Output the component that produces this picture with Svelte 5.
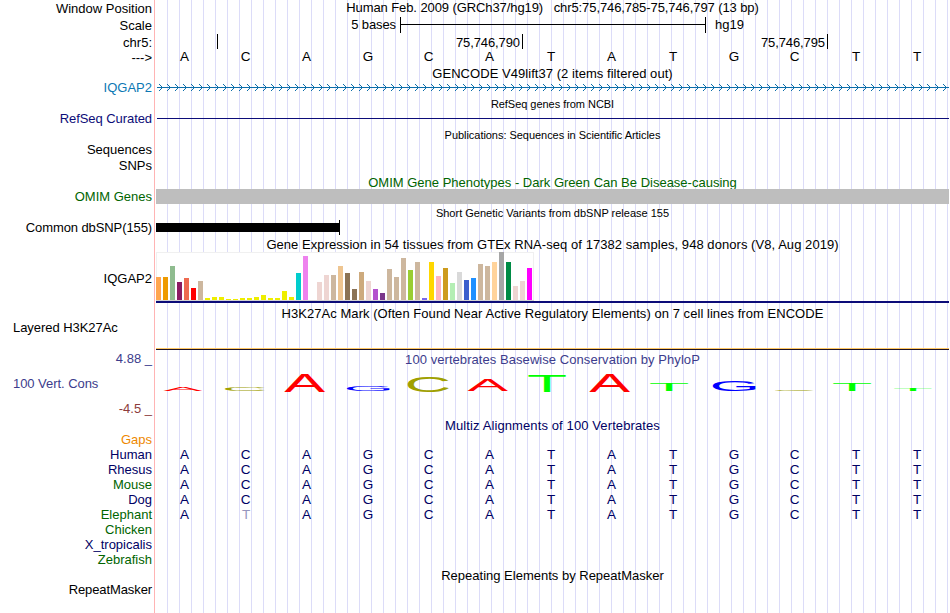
<script>
  const labels = [
    { text: 'Window Position', base: 13 },
    { text: 'Scale', base: 30 },
    { text: 'chr5:', base: 47 },
    { text: '--->', base: 62 },
    { text: 'IQGAP2', base: 92, tone: 'gencode' },
    { text: 'RefSeq Curated', base: 123, tone: 'refseq' },
    { text: 'Sequences', base: 154 },
    { text: 'SNPs', base: 170 },
    { text: 'OMIM Genes', base: 201, tone: 'green' },
    { text: 'Common dbSNP(155)', base: 232, tight: true },
    { text: 'IQGAP2', base: 283 },
    { text: 'Layered H3K27Ac', base: 332, left: true },
    { text: '4.88 _', base: 363, tone: 'cons' },
    { text: '100 Vert. Cons', base: 388, tone: 'cons', left: true },
    { text: '-4.5 _', base: 413, tone: 'neg' },
    { text: 'Gaps', base: 444, tone: 'gaps' },
    { text: 'Human', base: 459, tone: 'navy' },
    { text: 'Rhesus', base: 474, tone: 'navy' },
    { text: 'Mouse', base: 489, tone: 'green' },
    { text: 'Dog', base: 504, tone: 'navy' },
    { text: 'Elephant', base: 519, tone: 'green' },
    { text: 'Chicken', base: 534, tone: 'green' },
    { text: 'X_tropicalis', base: 549, tone: 'navy' },
    { text: 'Zebrafish', base: 564, tone: 'green' },
    { text: 'RepeatMasker', base: 594, tight: true }
  ].map((l, i, all) => ({ ...l, height: l.base - (i ? all[i - 1].base : -3) }));

  const bases = 'ACAGCATATGCTT'.split('');
  const species = ['Human', 'Rhesus', 'Mouse', 'Dog', 'Elephant'];
  const arrows = Array.from({ length: 99 }, (_, i) => 3 + i * 8);

  const gtex = [
    ['#ffa54f', 23], ['#ee9a00', 23], ['#8fbc8f', 34], ['#8b1c62', 18], ['#ee6a50', 22], ['#ff0000', 12],
    ['#cdb79e', 19], ['#eeee00', 2], ['#eeee00', 3], ['#eeee00', 3], ['#eeee00', 1], ['#eeee00', 1],
    ['#eeee00', 2], ['#eeee00', 2], ['#eeee00', 3], ['#eeee00', 5], ['#eeee00', 2], ['#eeee00', 2],
    ['#eeee00', 9], ['#eeee00', 3], ['#00cdcd', 27], ['#ee82ee', 44], ['#9ac0cd', 0], ['#eed5d2', 18],
    ['#eed5d2', 25], ['#cdb79e', 25], ['#eec591', 34], ['#8b7355', 27], ['#8b7355', 11], ['#cdaa7d', 28],
    ['#eed5d2', 19], ['#b452cd', 11], ['#7a378b', 7], ['#cdb79e', 31], ['#cdb79e', 23], ['#cdb79e', 42],
    ['#9acd32', 30], ['#cdb79e', 38], ['#7a67ee', 2], ['#ffd700', 38], ['#ffb6c1', 24], ['#cd9b1d', 32],
    ['#b4eeb4', 17], ['#d9d9d9', 28], ['#3a5fcd', 20], ['#1e90ff', 22], ['#cdb79e', 36], ['#cdb79e', 34],
    ['#ffd39b', 38], ['#a6a6a6', 48], ['#008b45', 38], ['#eed5d2', 14], ['#eed5d2', 19], ['#ff00ff', 32]
  ];

  // Ink bounds of each base letter at font-size 100: left, width, below baseline, height
  const ink = {
    A: [0.15, 66.3, 0, 68.8],
    C: [5, 63.3, 1, 70.8],
    G: [5, 66.5, 1, 70.8],
    T: [2.05, 56.9, 0, 68.8]
  };
  const fills = { A: '#ff0000', C: '#a0a000', G: '#0000ff', T: '#00ff00' };
  // Left, right, top and bottom of each conservation letter inside the track
  const logo = [
    [7.3, 46.3, 20, 24], [69, 109, 20, 24], [128.3, 169, 7, 25], [190.7, 234, 19, 24],
    [251.7, 292.7, 10, 25], [311.7, 352, 13, 24], [372.3, 409.7, 9, 25], [433.3, 474, 7, 25],
    [494, 532, 16, 24], [556.7, 600, 13, 24], [618.7, 658, 23, 24], [677, 715, 16, 24], [738, 775.7, 22, 24]
  ].map(([x0, x1, y0, y1], i) => {
    const [l, w, below, h] = ink[bases[i]];
    const sx = (x1 - x0) / w;
    const sy = (y1 - y0) / h;
    return { base: bases[i], m: `matrix(${sx} 0 0 ${sy} ${x0 - l * sx} ${y1 - below * sy})` };
  });
</script>

<div class="browser">
  <div class="labels">
    {#each labels as l}
      <div class="label {l.tone ?? ''}" class:left={l.left} class:tight={l.tight} style="height:{l.height}px">{l.text}</div>
    {/each}
  </div>

  <div class="tracks">
    <div class="title t-pos"><span>Human Feb. 2009 (GRCh37/hg19)&nbsp;&nbsp; chr5:75,746,785-75,746,797 (13 bp)</span></div>
    <div class="scale">
      <span class="amount">5 bases</span>
      <span class="bracket"><i></i></span>
      <span class="db">hg19</span>
    </div>
    <div class="coords">
      <div class="first"></div>
      <div><span>75,746,790</span></div>
      <div><span>75,746,795</span></div>
    </div>
    <div class="bases">{#each bases as b}<span class:wide={b === 'G' || b === 'T'}>{b}</span>{/each}</div>

    <div class="title t-gencode"><span>GENCODE V49lift37 (2 items filtered out)</span></div>
    <svg class="strand" width="793" height="14" shape-rendering="crispEdges">
      <rect x="1" y="6" width="792" height="1" fill="#0c6eaa" />
      {#each arrows as x}
        <path d="M{x} 3h1v1h1v1h1v1h1v1h-1v1h-1v1h-1v1h-1v-1h1v-1h1v-1h1v-1h-1v-1h-1v-1h-1z" fill="#0c6eaa" />
      {/each}
    </svg>

    <div class="title small t-ncbi"><span>RefSeq genes from NCBI</span></div>
    <div class="intron"></div>
    <div class="title small t-pubs"><span>Publications: Sequences in Scientific Articles</span></div>
    <div class="title green t-omim"><span>OMIM Gene Phenotypes - Dark Green Can Be Disease-causing</span></div>
    <div class="omim"></div>
    <div class="title small t-snp"><span>Short Genetic Variants from dbSNP release 155</span></div>
    <div class="snp"><div class="variant"></div><div class="end"></div></div>

    <div class="title t-gtex"><span>Gene Expression in 54 tissues from GTEx RNA-seq of 17382 samples, 948 donors (V8, Aug 2019)</span></div>
    <div class="gtex">
      <div class="chart">
        {#each gtex as [color, h]}<i style="height:{h}px;background:{color}"></i>{/each}
      </div>
    </div>

    <div class="title t-h3k"><span>H3K27Ac Mark (Often Found Near Active Regulatory Elements) on 7 cell lines from ENCODE</span></div>
    <div class="h3k"></div>

    <div class="title cons t-phylop"><span>100 vertebrates Basewise Conservation by PhyloP</span></div>
    <svg class="logo" width="793" height="28">
      {#each logo as g}
        <text transform={g.m} fill={fills[g.base]}>{g.base}</text>
      {/each}
    </svg>

    <div class="title navy t-multiz"><span>Multiz Alignments of 100 Vertebrates</span></div>
    <div class="alignment">
      {#each species as s}
        <div class="bases navy">
          {#each bases as b, i}
            {#if s === 'Elephant' && i === 1}<span class="mismatch wide">T</span>{:else}<span class:wide={b === 'G' || b === 'T'}>{b}</span>{/if}
          {/each}
        </div>
      {/each}
    </div>
    <div class="title t-rmsk"><span>Repeating Elements by RepeatMasker</span></div>
  </div>
</div>

<style>
  :global(body) {
    background: #fff;
  }
  .browser {
    display: flex;
    width: 949px;
    height: 613px;
    overflow: hidden;
    font: 13px/15px 'Liberation Sans', Arial, sans-serif;
    color: #000;
    white-space: nowrap;
  }
  .labels {
    box-sizing: border-box;
    width: 155px;
    flex: none;
    padding-right: 2px;
    border-right: 1px solid #ffb4b4;
  }
  .label {
    display: flex;
    align-items: flex-end;
    justify-content: flex-end;
  }
  .label.left {
    justify-content: flex-start;
    padding-left: 13px;
    letter-spacing: -0.05px;
  }
  .label.tight { letter-spacing: -0.1px; }
  .gencode { color: #0c78b4; }
  .refseq { color: #0c0c78; letter-spacing: -0.07px; }
  .green { color: #006400; }
  .cons { color: #3c3c8c; }
  .neg { color: #8c3c3c; }
  .gaps { color: #ee8800; }
  .navy { color: #000064; }

  .tracks {
    box-sizing: border-box;
    width: 794px;
    padding-left: 1px;
    background: repeating-linear-gradient(90deg, transparent 0 11px, #dcdcf8 11px 12px) 1px 0 / 793px 100% no-repeat;
  }
  .title {
    display: flex;
    align-items: flex-end;
    justify-content: center;
    height: 17px;
  }
  .small {
    height: 16px;
    font-size: 11px;
  }
  .small span {
    margin-bottom: -1px;
  }
  .t-pos { height: 15px; letter-spacing: -0.09px; }
  .t-gencode { letter-spacing: 0.05px; }
  .t-ncbi, .t-pubs { letter-spacing: -0.04px; }
  .t-omim { height: 48px; margin-bottom: -1px; }
  .t-gtex { letter-spacing: 0.055px; }
  .t-h3k { height: 18px; letter-spacing: 0.05px; }
  .t-phylop { letter-spacing: 0.06px; }
  .t-multiz { height: 38px; letter-spacing: 0.11px; }
  .t-rmsk { height: 61px; }

  .scale {
    display: flex;
    height: 18px;
  }
  .scale > span { padding-top: 2px; }
  .scale .amount {
    width: 240px;
    padding-right: 4px;
    text-align: right;
    letter-spacing: -0.1px;
  }
  .scale .bracket {
    box-sizing: border-box;
    width: 306px;
    height: 16px;
    margin-top: 2px;
    padding-top: 7px;
    border: solid #000;
    border-width: 0 1px;
  }
  .bracket i {
    display: block;
    height: 1px;
    background: #000;
  }
  .scale .db { padding-left: 9px; }

  .coords {
    display: flex;
    height: 15px;
    padding-top: 1px;
  }
  .coords div {
    box-sizing: border-box;
    width: 305px;
    height: 15px;
    padding: 1px 2px 0 0;
    border-right: 1px solid #000;
    text-align: right;
    letter-spacing: -0.1px;
  }
  .coords .first { width: 62px; }

  .bases {
    display: grid;
    grid-template-columns: repeat(13, 61px);
    height: 15px;
    margin-left: -2px;
    text-align: center;
    font-size: 13.5px;
  }
  .wide { padding-left: 1px; }
  .mismatch { color: #9696be; }
  .alignment { padding-top: 14px; }

  svg {
    display: block;
    overflow: visible;
  }
  .intron {
    height: 1px;
    margin: 7px 0 7px 1px;
    background: #0c0c78;
  }
  .omim {
    position: relative;
    height: 15px;
    background: #bebebe;
  }
  .snp {
    display: flex;
    align-items: center;
    height: 15px;
  }
  .variant {
    width: 183px;
    height: 9px;
    background: #000;
  }
  .end {
    width: 1px;
    height: 15px;
    background: #000;
  }
  .gtex {
    height: 49px;
    border-bottom: 2px solid #0c0c78;
  }
  .chart {
    box-sizing: border-box;
    display: flex;
    align-items: flex-end;
    gap: 2px;
    width: 378px;
    height: 49px;
    border-bottom: 1px solid #d2d2d2;
    background: #fff;
    box-shadow: inset 1px 1px #f0f0f0, inset -1px 0 #f0f0f0;
  }
  .chart i { width: 5px; }
  .h3k {
    box-sizing: border-box;
    height: 29px;
    background: linear-gradient(#ffc864 0 1px, #1e1428 1px 2px) 0 27px / 100% 2px no-repeat;
  }
  .logo text {
    font-size: 100px;
    font-family: 'Liberation Sans', Arial, sans-serif;
  }
</style>
